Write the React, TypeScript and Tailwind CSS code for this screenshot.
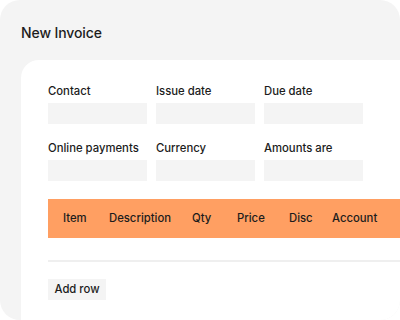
import React from 'react';

const fields = [
  ['Contact', 'Issue date', 'Due date'],
  ['Online payments', 'Currency', 'Amounts are'],
];

const columns = [
  { label: 'Item', w: 'w-[46px]' },
  { label: 'Description', w: 'w-[83px]' },
  { label: 'Qty', w: 'w-[45px]' },
  { label: 'Price', w: 'w-[52px]' },
  { label: 'Disc', w: 'w-[43px]' },
  { label: 'Account', w: 'w-[70px]' },
];

export default function App() {
  return (
    <div
      className="w-[400px] h-[320px] bg-white text-[#1c1c1c]"
      style={{ fontFamily: 'Inter, "Open Sans", sans-serif' }}
    >
      <div className="w-[400px] h-[320px] overflow-hidden rounded-[20px] bg-[#f4f4f4]">
        <h1 className="pl-[21px] pt-[24px] text-[14px] font-medium leading-[17px] tracking-[-0.1px]">
          New Invoice
        </h1>
        <div className="ml-[21px] mt-[19px] w-[440px] h-[300px] rounded-[18px] bg-white pl-[27px] pt-[24px]">
          {fields.map((row, i) => (
            <div key={i} className={`flex gap-[9px] ${i > 0 ? 'mt-[17px]' : ''}`}>
              {row.map((label) => (
                <div key={label} className="w-[99px]">
                  <div className="text-[11.3px] font-medium leading-[14px]">{label}</div>
                  <div className="mt-[5px] h-[21px] bg-[#f4f4f4]" />
                </div>
              ))}
            </div>
          ))}
          <div className="mt-[18px] flex h-[39px] items-center bg-[#ff9f62] pl-[15px] text-[11.3px] font-medium">
            {columns.map((c) => (
              <div key={c.label} className={c.w}>
                {c.label}
              </div>
            ))}
          </div>
          <div className="mt-[22px] h-[2px] bg-[#efefef]" />
          <button className="mt-[17px] h-[21px] w-[58px] bg-[#f4f4f4] text-[11.3px] font-medium">
            Add row
          </button>
        </div>
      </div>
    </div>
  );
}
